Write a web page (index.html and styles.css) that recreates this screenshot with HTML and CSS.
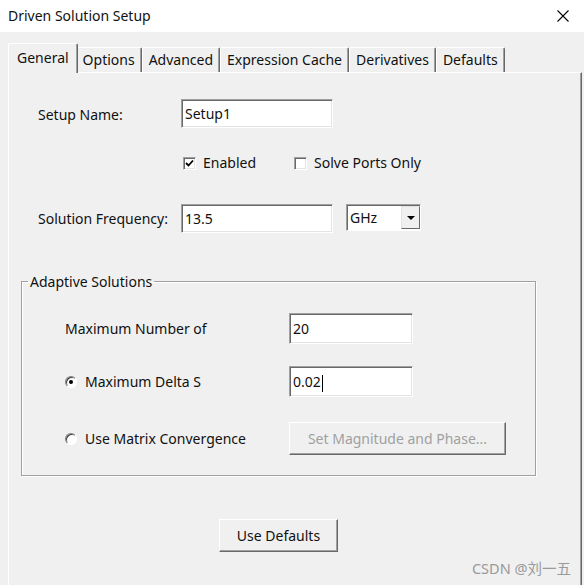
FILE: index.html
```html
<!DOCTYPE html>
<html lang="en">
<head>
  <meta charset="UTF-8">
  <meta name="viewport" content="width=device-width, initial-scale=1.0">
  <title>Driven Solution Setup</title>
  <link rel="stylesheet" href="styles.css">
</head>
<body>

  <div class="window">
    <div class="titlebar">
      <span class="title">Driven Solution Setup</span>
      <svg class="close" width="12" height="12" viewBox="0 0 12 12">
        <path d="M0.5 0.5 L11.5 11.5 M11.5 0.5 L0.5 11.5" stroke="#000" stroke-width="1.1" fill="none"/>
      </svg>
    </div>

    <div class="content">
      <div class="tabs">
        <div class="tab active">General</div>
        <div class="tab">Options</div>
        <div class="tab">Advanced</div>
        <div class="tab">Expression Cache</div>
        <div class="tab">Derivatives</div>
        <div class="tab">Defaults</div>
      </div>

      <div class="panel">
        <div class="row first">
          <span class="label">Setup Name:</span>
          <div class="field wide">Setup1</div>
        </div>

        <div class="row checks">
          <div class="check">
            <span class="box">
              <svg width="9" height="9" viewBox="0 0 9 9"><path d="M1 4 L3.5 6.5 L8 1.5" stroke="#000" stroke-width="1.8" fill="none"/></svg>
            </span>
            Enabled
          </div>
          <div class="check">
            <span class="box"></span>
            Solve Ports Only
          </div>
        </div>

        <div class="row freq">
          <span class="label">Solution Frequency:</span>
          <div class="field wide">13.5</div>
          <div class="combo">
            <span class="combo-text">GHz</span>
            <span class="combo-btn"><span class="tri"></span></span>
          </div>
        </div>

        <fieldset class="group">
          <legend>Adaptive Solutions</legend>

          <div class="grow">
            <span class="glabel">Maximum Number of</span>
            <div class="field short">20</div>
          </div>

          <div class="grow second">
            <span class="glabel"><span class="radio on"></span>Maximum Delta S</span>
            <div class="field short">0.02<span class="caret"></span></div>
          </div>

          <div class="grow third">
            <span class="glabel"><span class="radio"></span>Use Matrix Convergence</span>
            <button class="btn wide-btn" disabled>Set Magnitude and Phase...</button>
          </div>
        </fieldset>

        <div class="actions">
          <button class="btn">Use Defaults</button>
        </div>
      </div>
    </div>

    <div class="watermark">CSDN @刘一五</div>
  </div>

</body>
</html>
```

FILE: styles.css
```css
body {
  margin: 0;
  padding: 0;
  background-color: #f0f0f0;
  font-family: "Noto Sans", "Noto Sans CJK SC", sans-serif;
  font-size: 14px;
  color: #111;
}
.window {
  position: relative;
  width: 584px;
  height: 585px;
  overflow: hidden;
}
.titlebar {
  height: 32px;
  background-color: #fff;
  display: flex;
  align-items: center;
  justify-content: space-between;
  padding: 0 15px 0 8px;
  box-sizing: border-box;
}
.title {
  line-height: 20px;
}
.content {
  padding: 11px 2px 0 8px;
}
.tabs {
  display: flex;
  align-items: flex-end;
  height: 29px;
  padding-left: 2px;
}
.tab {
  height: 25px;
  line-height: 24px;
  padding: 0 6px;
  box-sizing: border-box;
  border-top: 1px solid #fff;
  border-left: 1px solid #fff;
  border-right: 1px solid #696969;
  box-shadow: inset -1px 0 0 #a0a0a0;
  border-radius: 2px 2px 0 0;
  white-space: nowrap;
}
.tab.active {
  position: relative;
  z-index: 1;
  height: 30px;
  line-height: 27px;
  margin: 0 -2px -1px -2px;
  padding: 0 8px;
  background-color: #f0f0f0;
}
.panel {
  height: 520px;
  box-sizing: border-box;
  border: 1px solid;
  border-color: #fff #696969 #696969 #fff;
  box-shadow: inset -1px -1px 0 #a0a0a0;
  padding: 0 0 0 12px;
}
.row {
  display: flex;
  align-items: center;
  padding-left: 17px;
}
.row.first {
  margin-top: 26px;
}
.label {
  width: 143px;
}
.row.first .label {
  padding-top: 2px;
}
.field {
  height: 29px;
  line-height: 27px;
  padding: 0 3px;
  box-sizing: border-box;
  background-color: #fff;
  border: 1px solid;
  border-color: #a0a0a0 #fff #fff #a0a0a0;
  box-shadow: inset 1px 1px 0 #696969, inset -1px -1px 0 #e3e3e3;
  white-space: nowrap;
}
.field.wide {
  width: 152px;
}
.field.short {
  width: 124px;
  height: 31px;
  line-height: 29px;
}
.caret {
  display: inline-block;
  width: 1px;
  height: 17px;
  background-color: #000;
  vertical-align: middle;
  margin-left: 1px;
}
.checks {
  margin-top: 27px;
  padding-left: 162px;
  gap: 38px;
}
.check {
  display: flex;
  align-items: center;
  gap: 7px;
  line-height: 16px;
}
.box {
  width: 13px;
  height: 13px;
  box-sizing: border-box;
  background-color: #fff;
  border: 1px solid;
  border-color: #a0a0a0 #fff #fff #a0a0a0;
  box-shadow: inset 1px 1px 0 #696969, inset -1px -1px 0 #e3e3e3;
  display: flex;
  align-items: center;
  justify-content: center;
}
.freq {
  margin-top: 33px;
  align-items: flex-start;
}
.freq .label {
  line-height: 29px;
}
.combo {
  margin-left: 13px;
  width: 75px;
  height: 27px;
  box-sizing: border-box;
  display: flex;
  background-color: #fff;
  border: 1px solid;
  border-color: #a0a0a0 #fff #fff #a0a0a0;
  box-shadow: inset 1px 1px 0 #696969;
}
.combo-text {
  flex: 1;
  line-height: 25px;
  padding-left: 3px;
}
.combo-btn {
  width: 19px;
  margin: 1px 0 1px 0;
  box-sizing: border-box;
  background-color: #f0f0f0;
  border: 1px solid;
  border-color: #e3e3e3 #696969 #696969 #e3e3e3;
  display: flex;
  align-items: center;
  justify-content: center;
}
.tri {
  width: 0;
  height: 0;
  border-left: 4px solid transparent;
  border-right: 4px solid transparent;
  border-top: 4px solid #000;
}
.group {
  width: 515px;
  box-sizing: border-box;
  margin: 39px 0 0 0;
  padding: 0 0 20px 0;
  border: 1px solid #a0a0a0;
  box-shadow: 1px 1px 0 #fff, inset 1px 1px 0 #fff;
}
.group legend {
  margin-left: 6px;
  padding: 0 2px;
  line-height: 19px;
}
.grow {
  display: flex;
  align-items: center;
  margin: 22px 0 0 43px;
}
.grow.second {
  margin-top: 22px;
}
.grow.third {
  margin-top: 25px;
}
.glabel {
  width: 224px;
  display: flex;
  align-items: center;
  gap: 8px;
}
.radio {
  position: relative;
  width: 12px;
  height: 12px;
  box-sizing: border-box;
  border-radius: 50%;
  background-color: #fff;
  border: 1px solid;
  border-color: #808080 #fff #fff #808080;
  box-shadow: inset 1px 1px 0 #404040;
}
.radio.on::after {
  content: "";
  position: absolute;
  left: 3px;
  top: 3px;
  width: 4px;
  height: 4px;
  border-radius: 50%;
  background-color: #000;
}
.btn {
  font-family: inherit;
  font-size: 14px;
  color: #111;
  width: 119px;
  height: 33px;
  padding: 0;
  background-color: #f0f0f0;
  border: 1px solid;
  border-color: #fff #696969 #696969 #fff;
  box-shadow: inset -1px -1px 0 #a0a0a0;
}
.btn.wide-btn {
  width: 217px;
}
.btn:disabled {
  color: #a0a0a0;
}
.actions {
  width: 515px;
  display: flex;
  justify-content: center;
  margin-top: 43px;
}
.watermark {
  position: absolute;
  right: 13px;
  bottom: 9px;
  color: #9a9a9a;
  font-size: 14.5px;
  line-height: 16px;
}
```
